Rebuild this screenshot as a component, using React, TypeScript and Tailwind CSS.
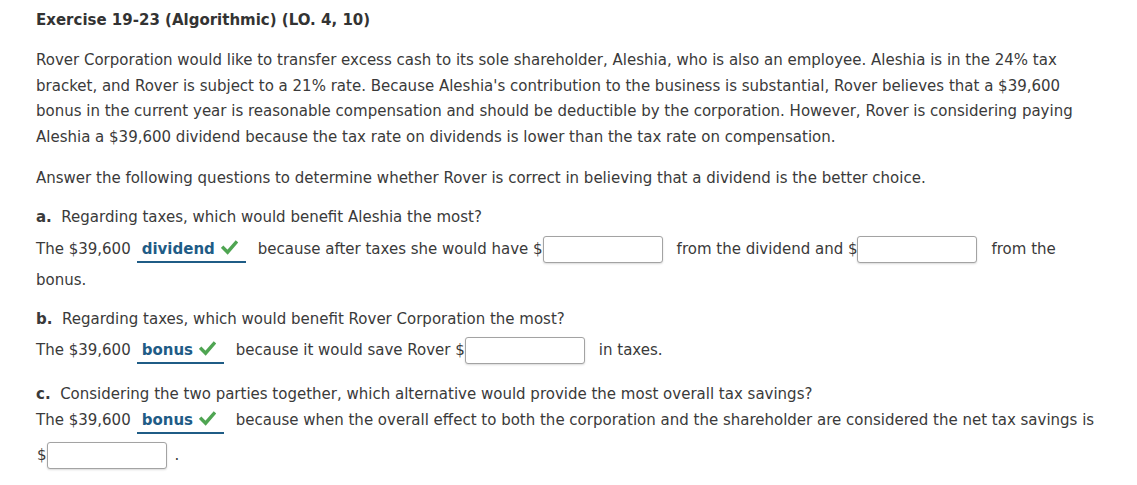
import React from "react";

function Check() {
  return (
    <svg viewBox="0 0 16 16" className="inline-block w-[17px] h-[17px] align-[-2px] ml-[6px]">
      <path d="M2.2 8.4 L6.2 12.4 L14 3.4" fill="none" stroke="#4fa552" strokeWidth="3.3" strokeLinecap="square" />
    </svg>
  );
}

function Pick({ label, w }: { label: string; w: string }) {
  return (
    <span className={`inline-block ${w} ml-[6px] mr-[12px] pl-[5px] border-b-2 border-[#1f5c86] leading-[24px] font-bold text-[#1f5c86]`}>
      {label}
      <Check />
    </span>
  );
}

function Amount({ className = "" }: { className?: string }) {
  return (
    <span className={`inline-block align-middle ${className}`}>
      <input
        type="text"
        className="w-[120px] h-[27px] border border-[#a3a3a3] rounded-[3px] bg-white shadow-[0_1px_2px_rgba(0,0,0,0.15)] outline-none"
      />
    </span>
  );
}

export default function App() {
  return (
    <div className="w-[1137px] h-[485px] bg-white px-[36px] pt-[7px] text-[15px] text-[#3a3a3a] font-['DejaVu_Sans',Verdana,sans-serif]">
      <h2 className="font-bold leading-[26px] text-[#333]">Exercise 19-23 (Algorithmic) (LO. 4, 10)</h2>

      <p className="mt-[15px] leading-[25.7px] w-[1060px]">
        Rover Corporation would like to transfer excess cash to its sole shareholder, Aleshia, who is also an employee. Aleshia is in the 24% tax bracket, and Rover is subject to a 21% rate. Because Aleshia's contribution to the business is substantial, Rover believes that a $39,600 bonus in the current year is reasonable compensation and should be deductible by the corporation. However, Rover is considering paying Aleshia a $39,600 dividend because the tax rate on dividends is lower than the tax rate on compensation.
      </p>

      <p className="mt-[14px] leading-[26px]">
        Answer the following questions to determine whether Rover is correct in believing that a dividend is the better choice.
      </p>

      <div className="mt-[13px]">
        <p className="leading-[26px]">
          <span className="font-bold">a.</span>&nbsp; Regarding taxes, which would benefit Aleshia the most?
        </p>
        <p className="mt-[4px] leading-[31px] w-[1040px]">
          The $39,600<Pick label="dividend" w="w-[109px]" />because after taxes she would have $<Amount className="mr-[14px]" />from the dividend and $<Amount className="mr-[14px]" />from the bonus.
        </p>
      </div>

      <div className="mt-[10px]">
        <p className="leading-[26px]">
          <span className="font-bold">b.</span>&nbsp; Regarding taxes, which would benefit Rover Corporation the most?
        </p>
        <p className="mt-[3px] leading-[31px]">
          The $39,600<Pick label="bonus" w="w-[87px]" />because it would save Rover $<Amount className="mr-[14px]" />in taxes.
        </p>
      </div>

      <div className="mt-[15px]">
        <p className="leading-[26px]">
          <span className="font-bold">c.</span>&nbsp; Considering the two parties together, which alternative would provide the most overall tax savings?
        </p>
        <p className="leading-[26px]">
          The $39,600<Pick label="bonus" w="w-[87px]" />because when the overall effect to both the corporation and the shareholder are considered the net tax savings is
        </p>
        <p className="mt-[6px] leading-[31px] pl-[1px]">
          $<Amount className="mr-[8px]" />.
        </p>
      </div>
    </div>
  );
}
